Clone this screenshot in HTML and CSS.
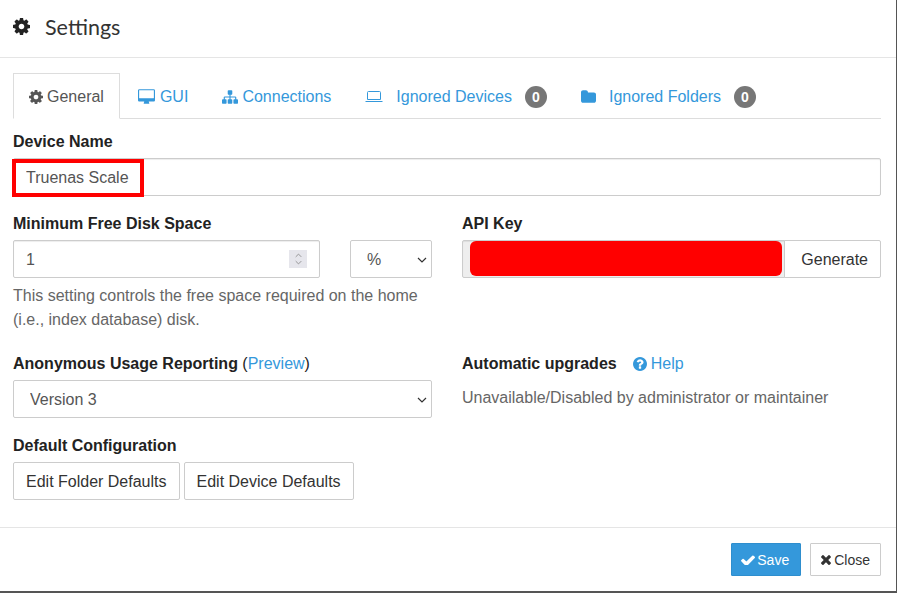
FILE: index.html
```html
<!DOCTYPE html>
<html lang="en">
    <head>
        <meta charset="utf-8">
        <title>Settings</title>
        <link rel="stylesheet" href="styles.css">
    </head>
    <body>
        <svg class="sprites" xmlns="http://www.w3.org/2000/svg">
            <symbol id="i-cog" viewBox="0 0 1536 1536"><path d="M1024 768q0-106-75-181t-181-75-181 75-75 181 75 181 181 75 181-75 75-181zm512-109v222q0 12-8 23t-20 13l-185 28q-19 54-39 91 35 50 107 138 10 12 10 25t-9 23q-27 37-99 108t-94 71q-12 0-26-9l-138-108q-44 23-91 38-16 136-29 186-7 28-36 28h-222q-14 0-24.5-8.5t-11.5-21.5l-28-184q-49-16-90-37l-141 107q-10 9-25 9-14 0-25-11-126-114-165-168-7-10-7-23 0-12 8-23 15-21 51-66.5t54-70.5q-27-50-41-99l-183-27q-13-2-21-12.5t-8-23.5v-222q0-12 8-23t19-13l186-28q14-46 39-92-40-57-107-138-10-12-10-24 0-10 9-23 26-36 98.5-107.5t94.5-71.5q13 0 26 10l138 107q44-23 91-38 16-136 29-186 7-28 36-28h222q14 0 24.5 8.5t11.5 21.5l28 184q49 16 90 37l142-107q9-9 24-9 13 0 25 10 129 119 165 170 7 8 7 22 0 12-8 23-15 21-51 66.5t-54 70.5q26 50 41 98l183 28q13 2 21 12.5t8 23.5z"/></symbol>
            <symbol id="i-desktop" viewBox="-64 0 1920 1664"><path d="M1728 992v-832q0-13-9.5-22.5t-22.5-9.5h-1600q-13 0-22.5 9.5t-9.5 22.5v832q0 13 9.5 22.5t22.5 9.5h1600q13 0 22.5-9.5t9.5-22.5zm128-832v1088q0 66-47 113t-113 47h-544q0 37 16 77.5t32 71 16 43.5q0 26-19 45t-45 19h-512q-26 0-45-19t-19-45q0-14 16-44t32-70 16-78h-544q-66 0-113-47t-47-113v-1088q0-66 47-113t113-47h1600q66 0 113 47t47 113z"/></symbol>
            <symbol id="i-sitemap" viewBox="0 128 1792 1536"><path d="M1792 1248v320q0 40-28 68t-68 28h-320q-40 0-68-28t-28-68v-320q0-40 28-68t68-28h96v-192h-512v192h96q40 0 68 28t28 68v320q0 40-28 68t-68 28h-320q-40 0-68-28t-28-68v-320q0-40 28-68t68-28h96v-192h-512v192h96q40 0 68 28t28 68v320q0 40-28 68t-68 28h-320q-40 0-68-28t-28-68v-320q0-40 28-68t68-28h96v-192q0-52 38-90t90-38h512v-192h-96q-40 0-68-28t-28-68v-320q0-40 28-68t68-28h320q40 0 68 28t28 68v320q0 40-28 68t-68 28h-96v192h512q52 0 90 38t38 90v192h96q40 0 68 28t28 68z"/></symbol>
            <symbol id="i-laptop" viewBox="0 0 18 12"><path d="M3.5 0.5h11a1 1 0 0 1 1 1v7h-13v-7a1 1 0 0 1 1-1z M0.5 10.5h17" fill="none" stroke="currentColor" stroke-width="1"/></symbol>
            <symbol id="i-folder" viewBox="-64 168 1664 1408"><path d="M1600 648v704q0 92-66 158t-158 66h-1216q-92 0-158-66t-66-158v-960q0-92 66-158t158-66h320q92 0 158 66t66 158v32h672q92 0 158 66t66 158z"/></symbol>
            <symbol id="i-question" viewBox="128 128 1536 1536"><path d="M1024 1376v-192q0-14-9-23t-23-9h-192q-14 0-23 9t-9 23v192q0 14 9 23t23 9h192q14 0 23-9t9-23zm256-672q0-88-55.5-163t-138.5-116-170-41q-243 0-371 213-15 24 8 42l132 100q7 6 19 6 16 0 25-12 53-68 86-92 34-24 86-24 48 0 85.5 26t37.5 59q0 38-20 61t-68 45q-63 28-115.5 86.5t-52.5 125.5v36q0 14 9 23t23 9h192q14 0 23-9t9-23q0-19 21.5-49.5t54.5-49.5q32-18 49-28.5t46-35 44.5-48 28-60.5 12.5-81zm384 192q0 209-103 385.5t-279.5 279.5-385.5 103-385.5-103-279.5-279.5-103-385.5 103-385.5 279.5-279.5 385.5-103 385.5 103 279.5 279.5 103 385.5z"/></symbol>
            <symbol id="i-check" viewBox="121 294 1550 1100"><path d="M1671 566q0 40-28 68l-724 724-136 136q-28 28-68 28t-68-28l-136-136-362-362q-28-28-28-68t28-68l136-136q28-28 68-28t68 28l294 295 656-657q28-28 68-28t68 28l136 136q28 28 28 68z"/></symbol>
            <symbol id="i-times" viewBox="186 238 1304 1316"><path d="M1490 1322q0 40-28 68l-136 136q-28 28-68 28t-68-28l-294-294-294 294q-28 28-68 28t-68-28l-136-136q-28-28-28-68t28-68l294-294-294-294q-28-28-28-68t28-68l136-136q28-28 68-28t68 28l294 294 294-294q28-28 68-28t68 28l136 136q28 28 28 68t-28 68l-294 294 294 294q28 28 28 68z"/></symbol>
            <symbol id="i-chevron" viewBox="0 0 10 6"><path d="M1 1l4 4 4-4" fill="none" stroke="currentColor" stroke-width="1.2"/></symbol>
        </svg>

        <div class="modal">
            <div class="modal-header">
                <svg class="icon icon-title"><use href="#i-cog"/></svg>
                <h4>Settings</h4>
            </div>

            <div class="modal-body">
                <ul class="tabs">
                    <li class="active"><a><svg class="icon icon-cog"><use href="#i-cog"/></svg>General</a></li>
                    <li><a><svg class="icon icon-desktop"><use href="#i-desktop"/></svg>GUI</a></li>
                    <li><a><svg class="icon icon-sitemap"><use href="#i-sitemap"/></svg>Connections</a></li>
                    <li><a><svg class="icon icon-laptop"><use href="#i-laptop"/></svg>Ignored Devices<span class="badge">0</span></a></li>
                    <li><a><svg class="icon icon-folder"><use href="#i-folder"/></svg>Ignored Folders<span class="badge">0</span></a></li>
                </ul>

                <div class="form-group">
                    <label>Device Name</label>
                    <div class="field-wrap">
                        <input class="form-control" type="text" value="Truenas Scale">
                        <span class="redact-box"></span>
                    </div>
                </div>

                <div class="row row-disk">
                    <div>
                        <label>Minimum Free Disk Space</label>
                        <div class="disk-fields">
                            <div class="field-wrap">
                                <input class="form-control" type="number" value="1">
                                <span class="spinner">
                                    <svg class="icon spin-up"><use href="#i-chevron"/></svg>
                                    <svg class="icon"><use href="#i-chevron"/></svg>
                                </span>
                            </div>
                            <div class="field-wrap">
                                <select class="form-control"><option>%</option></select>
                                <svg class="icon select-arrow"><use href="#i-chevron"/></svg>
                            </div>
                        </div>
                        <p class="help">This setting controls the free space required on the home (i.e., index database) disk.</p>
                    </div>
                    <div>
                        <label>API Key</label>
                        <div class="input-group">
                            <div class="field-wrap field-key">
                                <input class="form-control key-input" type="text" readonly>
                                <span class="redact-fill"></span>
                            </div>
                            <button class="btn btn-generate">Generate</button>
                        </div>
                    </div>
                </div>

                <div class="row row-usage">
                    <div>
                        <label>Anonymous Usage Reporting <span class="plain">(<a>Preview</a>)</span></label>
                        <div class="field-wrap">
                            <select class="form-control"><option>Version 3</option></select>
                            <svg class="icon select-arrow"><use href="#i-chevron"/></svg>
                        </div>
                    </div>
                    <div>
                        <label class="label-help">Automatic upgrades<a class="help-link"><svg class="icon icon-question"><use href="#i-question"/></svg>Help</a></label>
                        <p class="static-text">Unavailable/Disabled by administrator or maintainer</p>
                    </div>
                </div>

                <div class="defaults">
                    <label>Default Configuration</label>
                    <div class="btn-row">
                        <button class="btn">Edit Folder Defaults</button>
                        <button class="btn">Edit Device Defaults</button>
                    </div>
                </div>
            </div>

            <div class="modal-footer">
                <button class="btn btn-sm btn-primary"><svg class="icon icon-check"><use href="#i-check"/></svg>Save</button>
                <button class="btn btn-sm btn-close"><svg class="icon icon-times"><use href="#i-times"/></svg>Close</button>
            </div>
        </div>
    </body>
</html>
```

FILE: styles.css
```css
* {
    margin: 0;
    padding: 0;
    box-sizing: border-box;
}
:root {
    --link-color: #3498db;
    --fg-color: #222;
    --muted-color: #666;
    --line-color: #e5e5e5;
    --field-border: #ccc;
}
html {
    font-family: "Liberation Sans", Arial, sans-serif;
    font-size: 16px;
    color: var(--fg-color);
    background-color: #fff;
}
body {
    width: 897px;
    height: 593px;
    overflow: hidden;
}
.sprites {
    display: none;
}
.icon {
    display: block;
    flex: none;
    fill: currentColor;
}
.modal {
    width: 897px;
    height: 593px;
    border-right: 1px solid #555;
    border-bottom: 2px solid #555;
    display: flex;
    flex-direction: column;
}
.modal-header {
    height: 58px;
    padding: 0 0 4px 13px;
    border-bottom: 1px solid var(--line-color);
    display: flex;
    align-items: center;
    flex: none;
}
.modal-header h4 {
    font-family: Lato, sans-serif;
    font-size: 21.5px;
    font-weight: 400;
    color: #333;
    margin-left: 15px;
}
.icon-title {
    width: 17px;
    height: 17px;
}
.modal-body {
    flex: 1;
    padding: 15px 15px 0 13px;
}
.tabs {
    list-style: none;
    display: flex;
    height: 46px;
    border-bottom: 1px solid #ddd;
}
.tabs li {
    margin-right: 2px;
}
.tabs a {
    height: 46px;
    padding: 1px 15px 0;
    border: 1px solid transparent;
    display: flex;
    align-items: center;
    color: var(--link-color);
}
.tabs .active a {
    color: #555;
    background-color: #fff;
    border-color: #ddd #ddd #fff;
}
.icon-cog {
    width: 14px;
    height: 14px;
    margin-right: 4px;
}
.icon-desktop {
    width: 17px;
    height: 15px;
    margin-right: 5px;
}
.icon-sitemap {
    width: 16px;
    height: 14px;
    margin-right: 4px;
}
.icon-laptop {
    width: 18px;
    height: 12px;
    margin-right: 13px;
}
.icon-folder {
    width: 15px;
    height: 13px;
    margin-right: 13px;
}
.badge {
    width: 22px;
    height: 22px;
    margin-left: 13px;
    border-radius: 50%;
    background-color: #777;
    color: #fff;
    font-size: 14px;
    font-weight: bold;
    line-height: 22px;
    text-align: center;
}
label {
    display: block;
    font-weight: bold;
    line-height: 23px;
    margin-bottom: 5px;
}
.plain {
    font-weight: 400;
}
a {
    color: var(--link-color);
}
.form-group {
    margin-top: 11px;
    margin-bottom: 16px;
}
.form-control {
    display: block;
    width: 100%;
    height: 38px;
    padding: 7px 12px 5px;
    border: 1px solid var(--field-border);
    border-radius: 2px;
    background-color: #fff;
    box-shadow: inset 0 1px 1px rgba(0, 0, 0, .075);
    color: #555;
    font-family: inherit;
    font-size: 16px;
}
select.form-control {
    appearance: none;
    padding: 6px 12px 6px 16px;
    box-shadow: none;
}
.field-wrap {
    position: relative;
}
.redact-box {
    position: absolute;
    left: -1px;
    top: 1px;
    width: 132px;
    height: 38px;
    border: 4px solid #f00;
}
.row {
    display: grid;
    grid-template-columns: 419px 419px;
    column-gap: 30px;
}
.row-disk {
    margin-bottom: 20px;
}
.row-usage {
    margin-bottom: 16px;
}
.disk-fields {
    display: grid;
    grid-template-columns: 307px 82px;
    column-gap: 30px;
}
input[type=number]::-webkit-inner-spin-button {
    display: none;
}
.spinner {
    position: absolute;
    right: 13px;
    top: 10px;
    width: 18px;
    height: 18px;
    background-color: #e6e6ec;
    color: #888;
    display: flex;
    flex-direction: column;
    align-items: center;
    justify-content: center;
    gap: 2px;
}
.spinner .icon {
    width: 7px;
    height: 5px;
}
.spin-up {
    transform: scaleY(-1);
}
.select-arrow {
    position: absolute;
    right: 5px;
    top: 17px;
    width: 10px;
    height: 6px;
    color: #333;
    pointer-events: none;
}
.help {
    margin-top: 6px;
    line-height: 24px;
    color: var(--muted-color);
}
.input-group {
    display: flex;
}
.field-key {
    flex: 1;
}
.key-input {
    background-color: #eee;
    border-radius: 2px 0 0 2px;
}
.redact-fill {
    position: absolute;
    left: 8px;
    top: 1px;
    width: 312px;
    height: 35px;
    background-color: #f00;
    border-radius: 6px;
}
.btn {
    height: 38px;
    padding: 2px 12px 0;
    border: 1px solid var(--field-border);
    border-radius: 2px;
    background-color: #fff;
    color: #333;
    font-family: inherit;
    font-size: 16px;
}
.btn-generate {
    width: 97px;
    margin-left: -1px;
    border-radius: 0 2px 2px 0;
    text-align: right;
}
.label-help {
    display: flex;
    align-items: center;
}
.help-link {
    margin-left: 16px;
    font-weight: 400;
    display: flex;
    align-items: center;
}
.icon-question {
    width: 14px;
    height: 14px;
    margin-right: 4px;
}
.static-text {
    padding-top: 6px;
    line-height: 24px;
    color: var(--muted-color);
}
.btn-row {
    display: flex;
    gap: 4px;
}
.modal-footer {
    flex: none;
    height: 64px;
    padding: 15px 15px 15px 0;
    border-top: 1px solid var(--line-color);
    display: flex;
    justify-content: flex-end;
    gap: 9px;
}
.btn-sm {
    height: 33px;
    padding: 0 11px 0 9px;
    border-radius: 1px;
    font-size: 14px;
    display: flex;
    align-items: center;
}
.btn-close {
    padding-right: 10px;
}
.btn-primary {
    background-color: var(--link-color);
    border-color: #2e8ece;
    color: #fff;
}
.icon-check {
    width: 14px;
    height: 10px;
    margin-right: 2px;
}
.icon-times {
    width: 11px;
    height: 11px;
    margin-right: 3px;
}
```
